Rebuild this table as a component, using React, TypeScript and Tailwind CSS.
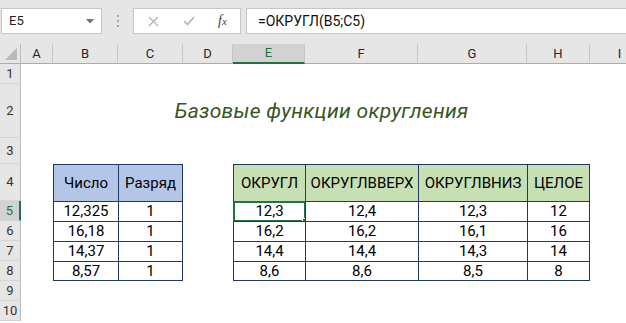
import React from 'react';

type Col = { id: string; w: string };

const columns: Col[] = [
  { id: 'A', w: 'w-[32px]' },
  { id: 'B', w: 'w-[65px]' },
  { id: 'C', w: 'w-[65px]' },
  { id: 'D', w: 'w-[50px]' },
  { id: 'E', w: 'w-[72px]' },
  { id: 'F', w: 'w-[113px]' },
  { id: 'G', w: 'w-[109px]' },
  { id: 'H', w: 'w-[63px]' },
  { id: 'I', w: 'w-[60px]' },
];

const source = [
  ['12,325', '1'],
  ['16,18', '1'],
  ['14,37', '1'],
  ['8,57', '1'],
];

const results = [
  ['12,3', '12,4', '12,3', '12'],
  ['16,2', '16,2', '16,1', '16'],
  ['14,4', '14,4', '14,3', '14'],
  ['8,6', '8,6', '8,5', '8'],
];

const line = 'border-[#203864]';

const RowHead: React.FC<{ n: number; selected?: boolean }> = ({ n, selected }) => (
  <div
    className={`w-[21px] shrink-0 flex items-center justify-center text-[13px] border-b border-[#d4d4d4] ${
      selected
        ? 'bg-[#d2d2d2] text-[#217346] border-r-2 border-r-[#217346]'
        : 'bg-[#e6e6e6] text-[#333] border-r border-r-[#bdbdbd]'
    }`}
  >
    {n}
  </div>
);

const Blank: React.FC<{ w: string }> = ({ w }) => <div className={`${w} shrink-0`} />;

// one bordered cell of the two little tables
const TCell: React.FC<{
  w: string;
  bg?: string;
  right?: boolean;
  bottom?: boolean;
  top?: boolean;
  children?: React.ReactNode;
  active?: boolean;
}> = ({ w, bg = 'bg-white', right, bottom, top, children, active }) => (
  <div
    className={`${w} shrink-0 relative flex items-center justify-center text-[15px] text-black border-l ${line} ${bg} ${
      right ? 'border-r' : ''
    } ${bottom ? 'border-b' : ''} ${top ? 'border-t' : ''}`}
  >
    {children}
    {active && (
      <>
        <div className="absolute -left-px -top-px -right-px -bottom-px border-2 border-[#217346]" />
        <div className="absolute -right-[4px] -bottom-[4px] w-[7px] h-[7px] bg-[#217346] border border-white" />
      </>
    )}
  </div>
);

const FormulaBar = () => (
  <div className="h-[44px] bg-[#e6e6e6] flex items-start pt-[8px] shrink-0">
    <div className="ml-px w-[101px] h-[26px] bg-white border border-[#c6c6c6] flex items-center justify-between pl-[7px] pr-[7px] text-[13px] text-[#222]">
      <span>E5</span>
      <svg width="8" height="5" viewBox="0 0 8 5">
        <path d="M0 0 H8 L4 4.5 Z" fill="#707070" />
      </svg>
    </div>
    <div className="w-[31px] h-[26px] flex flex-col items-center justify-center gap-[3px]">
      <span className="w-[2px] h-[2px] bg-[#a6a6a6]" />
      <span className="w-[2px] h-[2px] bg-[#a6a6a6]" />
      <span className="w-[2px] h-[2px] bg-[#a6a6a6]" />
    </div>
    <div className="w-[108px] h-[26px] bg-white border border-[#c6c6c6] flex items-center">
      <svg className="ml-[14px]" width="11" height="11" viewBox="0 0 11 11">
        <path d="M1 1 L10 10 M10 1 L1 10" stroke="#b3b3b3" strokeWidth="1.3" />
      </svg>
      <svg className="ml-[24px]" width="12" height="10" viewBox="0 0 12 10">
        <path d="M1 5 L4.5 8.5 L11 1" stroke="#b3b3b3" strokeWidth="1.6" fill="none" />
      </svg>
      <span className="ml-[23px] font-['Liberation_Serif',serif] italic text-[14px] text-[#444] leading-none">
        f<span className="text-[11px]">x</span>
      </span>
    </div>
    <div className="ml-[5px] flex-1 h-[26px] bg-white border border-[#c6c6c6] border-r-0 flex items-center pl-[11px] text-[14px] text-[#111]">
      =ОКРУГЛ(B5;C5)
    </div>
  </div>
);

const ColumnHeader = () => (
  <div className="flex h-[20px] bg-[#e6e6e6]">
    <div className="w-[21px] shrink-0 border-r border-[#bdbdbd] border-b border-b-[#ababab] relative">
      <svg className="absolute left-[5px] top-[4px]" width="12" height="12" viewBox="0 0 12 12">
        <path d="M12 0 V12 H0 Z" fill="#b9b9b9" />
      </svg>
    </div>
    {columns.map((c) => (
      <div
        key={c.id}
        className={`${c.w} shrink-0 flex items-center justify-center text-[13px] border-r border-[#c6c6c6] ${
          c.id === 'E'
            ? 'bg-[#d2d2d2] text-[#217346] border-b-2 border-b-[#217346]'
            : 'text-[#262626] border-b border-b-[#ababab]'
        }`}
      >
        {c.id}
      </div>
    ))}
  </div>
);

export default function App() {
  const w = Object.fromEntries(columns.map((c) => [c.id, c.w]));

  return (
    <div className="w-[626px] h-[323px] overflow-hidden bg-white font-['Roboto',sans-serif] flex flex-col">
      <FormulaBar />
      <ColumnHeader />

      <div className="flex h-[20px]">
        <RowHead n={1} />
      </div>

      <div className="flex h-[54px]">
        <RowHead n={2} />
        <Blank w={w.A} />
        <div className="w-[537px] shrink-0 flex items-center justify-center pt-[2px] italic text-[21px] tracking-[0.3px] text-[#375623]">
          Базовые функции округления
        </div>
      </div>

      <div className="flex h-[26px]">
        <RowHead n={3} />
      </div>

      <div className="flex h-[37px]">
        <RowHead n={4} />
        <Blank w={w.A} />
        <TCell w={w.B} bg="bg-[#b4c6e7]" top>Число</TCell>
        <TCell w={w.C} bg="bg-[#b4c6e7]" top right>Разряд</TCell>
        <Blank w={w.D} />
        <TCell w={w.E} bg="bg-[#c6e0b4]" top>ОКРУГЛ</TCell>
        <TCell w={w.F} bg="bg-[#c6e0b4]" top>ОКРУГЛВВЕРХ</TCell>
        <TCell w={w.G} bg="bg-[#c6e0b4]" top>ОКРУГЛВНИЗ</TCell>
        <TCell w={w.H} bg="bg-[#c6e0b4]" top right>ЦЕЛОЕ</TCell>
      </div>

      {source.map((row, i) => {
        const last = i === source.length - 1;
        return (
          <div key={i} className="flex h-[20px]">
            <RowHead n={5 + i} selected={i === 0} />
            <Blank w={w.A} />
            <TCell w={w.B} top bottom={last}>{row[0]}</TCell>
            <TCell w={w.C} top right bottom={last}>{row[1]}</TCell>
            <Blank w={w.D} />
            <TCell w={w.E} top bottom={last} active={i === 0}>{results[i][0]}</TCell>
            <TCell w={w.F} top bottom={last}>{results[i][1]}</TCell>
            <TCell w={w.G} top bottom={last}>{results[i][2]}</TCell>
            <TCell w={w.H} top right bottom={last}>{results[i][3]}</TCell>
          </div>
        );
      })}

      <div className="flex h-[20px]">
        <RowHead n={9} />
      </div>
      <div className="flex h-[20px]">
        <RowHead n={10} />
      </div>
    </div>
  );
}
